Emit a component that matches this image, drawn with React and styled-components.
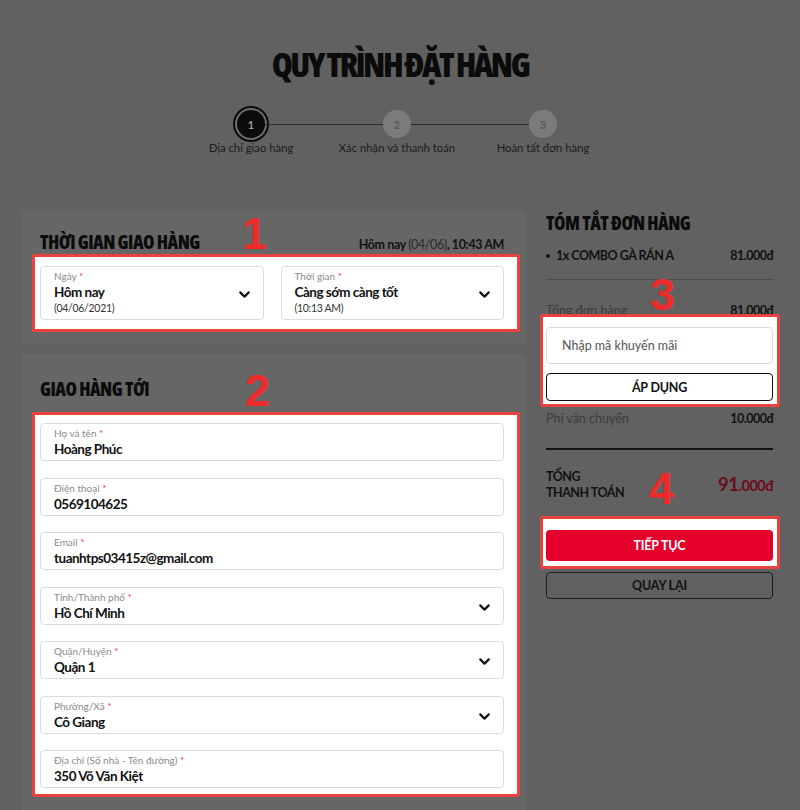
import React from 'react';
import styled, { createGlobalStyle } from 'styled-components';
import { ChevronDown } from 'lucide-react';

const condensed = '"Open Sans", "Liberation Sans Narrow", "DejaVu Sans Condensed", sans-serif';
const body = 'Lato, "Noto Sans", sans-serif';

const GlobalStyle = createGlobalStyle`
  html, body {
    margin: 0;
    background: #616161;
  }
  body {
    font-family: ${body};
    color: #111;
  }
`;

const Page = styled.div`
  position: relative;
  width: 800px;
  height: 810px;
  overflow: hidden;
  padding-top: 44px;
  box-sizing: border-box;
`;

const Title = styled.h1`
  margin: 0;
  text-align: center;
  font-family: ${condensed};
  font-stretch: 75%;
  font-weight: 800;
  font-size: 34px;
  line-height: 40px;
  letter-spacing: -2.5px;
  color: #0b0b0b;
`;

const Stepper = styled.div`
  margin: 26px 0 0 178px;
  width: 438px;
`;

const Track = styled.div`
  display: flex;
  align-items: center;
  padding: 0 59px;
`;

const Dot = styled.div`
  width: 28px;
  height: 28px;
  flex: none;
  border-radius: 50%;
  display: flex;
  align-items: center;
  justify-content: center;
  font-size: 11px;
  font-weight: 700;
  box-sizing: border-box;
  background: ${({ active }) => (active ? '#0b0b0b' : '#7b7b7b')};
  color: ${({ active }) => (active ? '#9a9a9a' : '#5a5a5a')};
  box-shadow: ${({ active }) => (active ? '0 0 0 2px #6e6e6e, 0 0 0 4px #0b0b0b' : 'none')};
`;

const Line = styled.div`
  flex: 1;
  height: 1px;
  background: #2c2c2c;
`;

const StepLabels = styled.div`
  display: grid;
  grid-template-columns: repeat(3, 146px);
  margin-top: 1px;
`;

const StepLabel = styled.div`
  text-align: center;
  font-size: 11.3px;
  line-height: 17px;
  color: #1c1c1c;
  white-space: nowrap;
`;

const Columns = styled.div`
  display: flex;
  gap: 21px;
  margin-top: 55px;
  padding-left: 22px;
`;

const LeftCol = styled.div`
  width: 503px;
  display: flex;
  flex-direction: column;
  gap: 10px;
`;

const Card = styled.section`
  background: #666;
  padding: ${({ pad }) => pad};
`;

const CardHead = styled.div`
  display: flex;
  justify-content: space-between;
  align-items: baseline;
`;

const Heading = styled.h2`
  margin: 0;
  font-family: ${condensed};
  font-stretch: 75%;
  font-weight: 800;
  font-size: 18.5px;
  line-height: 24px;
  letter-spacing: -0.5px;
  color: #0b0b0b;
`;

const NowText = styled.div`
  font-size: 12.5px;
  font-weight: 700;
  letter-spacing: -0.4px;
  color: #111;
  span {
    font-weight: 400;
    color: #2a2a2a;
  }
`;

const Highlight = styled.div`
  background: #fff;
  border: 3px solid #e8413e;
  border-radius: 2px;
  margin: ${({ m }) => m};
  padding: ${({ p }) => p};
`;

const SelectRow = styled.div`
  display: grid;
  grid-template-columns: 1fr 1fr;
  gap: 17px;
`;

const FieldList = styled.div`
  display: flex;
  flex-direction: column;
  gap: 16.5px;
`;

const Field = styled.div`
  height: ${({ tall }) => (tall ? '54px' : '38px')};
  box-sizing: border-box;
  border: 1px solid #dcdcdc;
  border-radius: 4px;
  padding: 3px 10px 0 13px;
  display: flex;
  align-items: center;
  gap: 8px;
`;

const FieldBody = styled.div`
  flex: 1;
  display: flex;
  flex-direction: column;
  align-self: flex-start;
`;

const Label = styled.div`
  font-size: 10px;
  line-height: 12px;
  color: #8a8a8a;
  b {
    color: #e8413e;
    font-weight: 400;
  }
`;

const Value = styled.div`
  font-size: 13.5px;
  line-height: 18px;
  font-weight: 700;
  letter-spacing: -0.5px;
  color: #111;
  margin-top: 1px;
`;

const Sub = styled.div`
  font-size: 10.5px;
  line-height: 14px;
  letter-spacing: -0.3px;
  color: #333;
`;

const RightCol = styled.div`
  width: 227px;
  display: flex;
  flex-direction: column;
`;

const Row = styled.div`
  display: flex;
  justify-content: space-between;
  align-items: center;
  font-size: 12.5px;
  line-height: 17px;
  color: ${({ muted }) => (muted ? '#3c3c3c' : '#111')};
  margin-top: ${({ mt }) => mt || '0'};
  b {
    letter-spacing: -0.5px;
    color: #111;
  }
`;

const ItemName = styled.span`
  font-weight: 700;
  letter-spacing: -0.5px;
  &::before {
    content: '';
    display: inline-block;
    width: 4px;
    height: 4px;
    border-radius: 50%;
    background: #111;
    margin: 0 6px 2px 0;
    vertical-align: middle;
  }
`;

const Divider = styled.hr`
  margin: ${({ m }) => m};
  border: 0;
  height: ${({ dark }) => (dark ? '1.5px' : '1px')};
  background: ${({ dark }) => (dark ? '#141414' : '#4c4c4c')};
`;

const PromoInput = styled.div`
  height: 37px;
  box-sizing: border-box;
  border: 1px solid #dcdcdc;
  border-radius: 4px;
  padding-left: 15px;
  display: flex;
  align-items: center;
  font-size: 12.5px;
  color: #555;
`;

const Button = styled.button`
  display: block;
  width: 100%;
  box-sizing: border-box;
  height: ${({ h }) => h};
  margin-top: ${({ mt }) => mt || '0'};
  border-radius: 4px;
  font-family: ${body};
  font-size: 12.5px;
  font-weight: 700;
  letter-spacing: -0.2px;
  cursor: pointer;
  background: ${({ variant }) => (variant === 'red' ? '#e4002b' : 'transparent')};
  color: ${({ variant }) => (variant === 'red' ? '#fff' : '#111')};
  border: ${({ variant, dim }) => {
    if (variant === 'red') return '0';
    return dim ? '1.5px solid #1e1e1e' : '1.5px solid #111';
  }};
`;

const TotalLabel = styled.div`
  font-size: 12.5px;
  line-height: 16px;
  font-weight: 700;
  letter-spacing: -0.5px;
  color: #111;
`;

const TotalPrice = styled.div`
  color: #6c0c1d;
  font-weight: 700;
  font-size: 14.5px;
  letter-spacing: -0.5px;
  span {
    font-size: 18.5px;
  }
`;

const Marker = styled.div`
  position: absolute;
  left: ${({ x }) => x}px;
  top: ${({ y }) => y}px;
  font-family: "Liberation Sans", Arial, sans-serif;
  font-weight: 700;
  font-size: 45px;
  line-height: 1;
  color: #ee2b2b;
`;

const Req = () => <b>*</b>;

const Chevron = () => <ChevronDown size={17} strokeWidth={3} color="#111" />;

const addressFields = [
  { label: 'Họ và tên', value: 'Hoàng Phúc' },
  { label: 'Điện thoại', value: '0569104625' },
  { label: 'Email', value: 'tuanhtps03415z@gmail.com' },
  { label: 'Tỉnh/Thành phố', value: 'Hồ Chí Minh', select: true },
  { label: 'Quận/Huyện', value: 'Quận 1', select: true },
  { label: 'Phường/Xã', value: 'Cô Giang', select: true },
  { label: 'Địa chỉ (Số nhà - Tên đường)', value: '350 Võ Văn Kiệt' },
];

const steps = ['Địa chỉ giao hàng', 'Xác nhận và thanh toán', 'Hoàn tất đơn hàng'];

const App = () => (
  <Page>
    <GlobalStyle />
    <Title>QUY TRÌNH ĐẶT HÀNG</Title>

    <Stepper>
      <Track>
        <Dot active>1</Dot>
        <Line />
        <Dot>2</Dot>
        <Line />
        <Dot>3</Dot>
      </Track>
      <StepLabels>
        {steps.map(s => <StepLabel key={s}>{s}</StepLabel>)}
      </StepLabels>
    </Stepper>

    <Columns>
      <LeftCol>
        <Card pad="19px 21px 12px 18px">
          <CardHead>
            <Heading>THỜI GIAN GIAO HÀNG</Heading>
            <NowText>
              Hôm nay <span>(04/06)</span>, 10:43 AM
            </NowText>
          </CardHead>
          <Highlight m="0 -16px 0 -8px" p="9px 13px 9px 5px">
            <SelectRow>
              <Field tall>
                <FieldBody>
                  <Label>Ngày <Req /></Label>
                  <Value>Hôm nay</Value>
                  <Sub>(04/06/2021)</Sub>
                </FieldBody>
                <Chevron />
              </Field>
              <Field tall>
                <FieldBody>
                  <Label>Thời gian <Req /></Label>
                  <Value>Càng sớm càng tốt</Value>
                  <Sub>(10:13 AM)</Sub>
                </FieldBody>
                <Chevron />
              </Field>
            </SelectRow>
          </Highlight>
        </Card>

        <Card pad="23px 21px 40px 18px">
          <Heading>GIAO HÀNG TỚI</Heading>
          <Highlight m="11px -16px 0 -8px" p="8px 13px 6px 5px">
            <FieldList>
              {addressFields.map(f => (
                <Field key={f.label}>
                  <FieldBody>
                    <Label>{f.label} <Req /></Label>
                    <Value>{f.value}</Value>
                  </FieldBody>
                  {f.select && <Chevron />}
                </Field>
              ))}
            </FieldList>
          </Highlight>
        </Card>
      </LeftCol>

      <RightCol>
        <Heading>TÓM TẮT ĐƠN HÀNG</Heading>
        <Row mt="12px">
          <ItemName>1x COMBO GÀ RÁN A</ItemName>
          <b>81.000đ</b>
        </Row>
        <Divider m="15px 0 0" />
        <Row muted mt="22px">
          Tổng đơn hàng
          <b>81.000đ</b>
        </Row>
        <Highlight m="-5px -7px 0 -6px" p="10px 4px 3px 3px">
          <PromoInput>Nhập mã khuyến mãi</PromoInput>
          <Button h="28px" mt="9px">ÁP DỤNG</Button>
        </Highlight>
        <Row muted mt="3px">
          Phí vận chuyển
          <b>10.000đ</b>
        </Row>
        <Divider dark m="21px 0 0" />
        <Row mt="19px">
          <TotalLabel>
            TỔNG
            <br />
            THANH TOÁN
          </TotalLabel>
          <TotalPrice>
            <span>91</span>.000đ
          </TotalPrice>
        </Row>
        <Highlight m="15px -7px 0 -6px" p="11px 4px 5px 3px">
          <Button variant="red" h="31px">TIẾP TỤC</Button>
        </Highlight>
        <Button dim h="27px" mt="3px">QUAY LẠI</Button>
      </RightCol>
    </Columns>

    <Marker x={242} y={211}>1</Marker>
    <Marker x={245} y={368}>2</Marker>
    <Marker x={650} y={272}>3</Marker>
    <Marker x={649} y={466}>4</Marker>
  </Page>
);

export default App;
